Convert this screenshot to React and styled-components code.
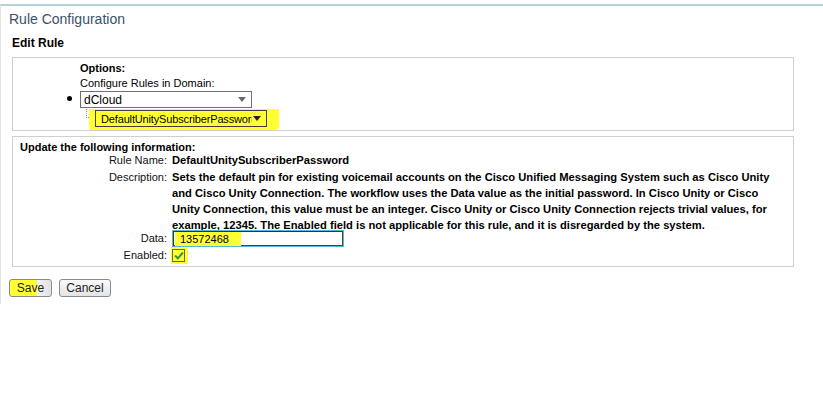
import React from "react";
import styled, { createGlobalStyle } from "styled-components";

const Global = createGlobalStyle`
  html, body { margin: 0; padding: 0; background: #fff; }
  body { font-family: "Liberation Sans", Arial, sans-serif; font-size: 11px; color: #000; }
`;

const Page = styled.div`
  margin-top: 4px;
  border-top: 2px solid #b4d2dc;
  border-left: 1px solid #e3e3e3;
  height: 300px;
  box-sizing: border-box;
  padding: 5px 0 0 8px;
  width: 823px;
`;

const Title = styled.div`
  font-size: 14px;
  color: #3a4f6d;
  line-height: 17px;
`;

const Heading = styled.div`
  font-size: 12px;
  font-weight: bold;
  margin: 8px 0 0 3px;
  line-height: 14px;
`;

const Panel = styled.div`
  margin: ${p => p.$top}px 0 0 3px;
  width: 782px;
  height: ${p => p.$h}px;
  box-sizing: border-box;
  border: 1px solid #cfcfcf;
  padding: ${p => p.$pad};
`;

const Bold = styled.div`
  font-weight: bold;
  line-height: 13px;
`;

const Plain = styled.div`
  line-height: 13px;
  margin-top: 2px;
`;

const Bullet = styled.div`
  display: flex;
  align-items: center;
  margin-top: 1px;
  margin-left: -13px;
  &::before {
    content: "";
    width: 5px;
    height: 5px;
    border-radius: 50%;
    background: #000;
    margin-right: 8px;
    margin-top: -3px;
  }
`;

const Select = styled.div`
  width: ${p => p.$w}px;
  height: 17px;
  box-sizing: border-box;
  border: 1px solid ${p => (p.$hl ? "#3f3f3f" : "#6f7275")};
  background: ${p => (p.$hl ? "#ffff33" : "#fff")};
  display: flex;
  align-items: center;
  padding-left: ${p => (p.$hl ? 5 : 3)}px;
  font-size: ${p => (p.$hl ? 11 : 12)}px;
  letter-spacing: ${p => (p.$hl ? "-0.15px" : "0")};
  white-space: nowrap;
`;

const SelText = styled.span`
  flex: 1;
  min-width: 0;
  overflow: hidden;
  text-overflow: clip;
`;

const Arrow = styled.span`
  width: 0;
  height: 0;
  border-left: 4px solid transparent;
  border-right: 4px solid transparent;
  border-top: 5px solid ${p => (p.$dark ? "#222" : "#6a6a6a")};
  margin: 0 5px 0 1px;
  flex: none;
`;

const TreeRow = styled.div`
  display: flex;
  align-items: flex-start;
  margin-left: 6px;
  margin-top: 1px;
`;

const Connector = styled.div`
  width: 8px;
  height: 8px;
  border-left: 1px dotted #8a8a8a;
  border-bottom: 1px dotted #8a8a8a;
`;

const Highlight = styled.div`
  background: #ffff33;
  padding: 1px 12px 3px 6px;
  margin-left: -6px;
  border-radius: 1px 0 4px 2px;
`;

const SectionTitle = styled.div`
  font-weight: bold;
  line-height: 13px;
`;

const Grid = styled.div`
  display: grid;
  grid-template-columns: 147px 1fr;
  column-gap: 5px;
  margin-top: -2px;
  align-items: start;
`;

const Label = styled.div`
  text-align: right;
  line-height: 16px;
  color: #111;
  margin-top: ${p => p.$shift || 0}px;
`;

const Value = styled.div`
  font-weight: bold;
  line-height: 16px;
  font-size: 11.2px;
  padding-right: 8px;
  margin-top: ${p => p.$shift || 0}px;
`;

const Cell = styled.div`
  margin-top: ${p => p.$shift || 0}px;
`;

const Input = styled.div`
  width: 172px;
  height: 17px;
  box-sizing: border-box;
  border: 1px solid #55b8db;
  box-shadow: inset -1px -1px 0 #444, inset 1px 1px 0 #333;
  display: flex;
  align-items: center;
  padding-left: 2px;
`;

const Marked = styled.span`
  background: #ffff33;
  padding: 1px 12px 1px 5px;
  font-size: 11px;
`;

const CheckWrap = styled.div`
  display: inline-flex;
  background: #ffff33;
  padding: 2px 3px 2px 1px;
  margin-left: -1px;
`;

const Check = styled.div`
  width: 13px;
  height: 13px;
  box-sizing: border-box;
  border: 1px solid #6b6b1a;
  display: flex;
  align-items: center;
  justify-content: center;
`;

const Buttons = styled.div`
  display: flex;
  gap: 7px;
  margin-top: 12px;
`;

const Button = styled.button`
  font-family: "Liberation Sans", Arial, sans-serif;
  font-size: 12px;
  height: 18px;
  width: ${p => p.$w}px;
  padding: 0;
  border: 1px solid #8c8c8c;
  border-radius: 3px;
  color: #222;
  background: ${p =>
    p.$hl
      ? "linear-gradient(90deg, #ffff33 0, #ffff33 65%, #f2f2f2 66%, #e2e2e2 100%)"
      : "linear-gradient(#fafafa, #e4e4e4)"};
  line-height: 16px;
`;

export default function App() {
  return (
    <>
      <Global />
      <Page>
        <Title>Rule Configuration</Title>
        <Heading>Edit Rule</Heading>
        <Panel $top={7} $h={74} $pad="4px 0 0 67px">
          <Bold>Options:</Bold>
          <Plain>Configure Rules in Domain:</Plain>
          <Bullet>
            <Select $w={172}>
              <SelText>dCloud</SelText>
              <Arrow />
            </Select>
          </Bullet>
          <TreeRow>
            <Connector />
            <Highlight>
              <Select $w={172} $hl>
                <SelText>DefaultUnitySubscriberPassword</SelText>
                <Arrow $dark />
              </Select>
            </Highlight>
          </TreeRow>
        </Panel>
        <Panel $top={5} $h={131} $pad="4px 0 0 7px">
          <SectionTitle>Update the following information:</SectionTitle>
          <Grid>
            <Label>Rule Name:</Label>
            <Value>DefaultUnitySubscriberPassword</Value>
            <Label $shift={1}>Description:</Label>
            <Value $shift={1}>
              Sets the default pin for existing voicemail accounts on the Cisco Unified Messaging System such as Cisco Unity
              and Cisco Unity Connection. The workflow uses the Data value as the initial password. In Cisco Unity or Cisco
              Unity Connection, this value must be an integer. Cisco Unity or Cisco Unity Connection rejects trivial values, for
              example, 12345. The Enabled field is not applicable for this rule, and it is disregarded by the system.
            </Value>
            <Label $shift={-3}>Data:</Label>
            <Cell $shift={-3}>
              <Input>
                <Marked>13572468</Marked>
              </Input>
            </Cell>
            <Label>Enabled:</Label>
            <Cell>
              <CheckWrap>
                <Check>
                  <svg width="10" height="9" viewBox="0 0 10 9">
                    <path d="M1 4.5 L3.8 7.3 L9 1.5" fill="none" stroke="#2f9a2f" strokeWidth="2" />
                  </svg>
                </Check>
              </CheckWrap>
            </Cell>
          </Grid>
        </Panel>
        <Buttons>
          <Button $w={43} $hl>Save</Button>
          <Button $w={52}>Cancel</Button>
        </Buttons>
      </Page>
    </>
  );
}
